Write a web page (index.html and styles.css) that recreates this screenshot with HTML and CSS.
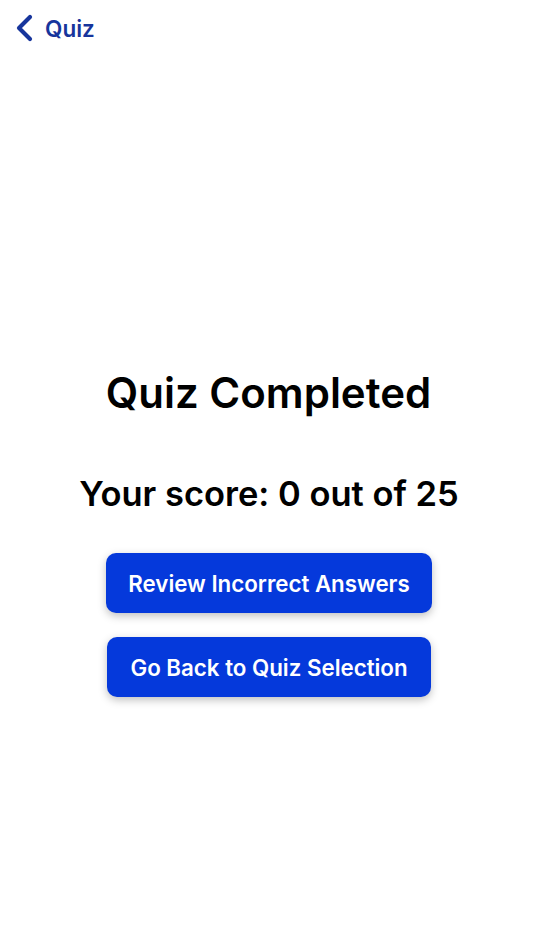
FILE: index.html
```html
<!DOCTYPE html>
<html lang="en">
<head>
<meta charset="utf-8">
<title>Quiz</title>
<link rel="stylesheet" href="styles.css">
</head>
<body>
<div class="screen">
  <header class="nav">
    <a class="back" href="#">
      <svg class="chev" width="20" height="28" viewBox="0 0 20 28"><path d="M16 3 L5 14 L16 25" fill="none" stroke="currentColor" stroke-width="4.2" stroke-linecap="round" stroke-linejoin="round"/></svg>
      <span class="back-label">Quiz</span>
    </a>
  </header>
  <main class="content">
    <h1 class="title">Quiz Completed</h1>
    <p class="score">Your score: 0 out of 25</p>
    <div class="actions">
      <button class="btn btn-review">Review Incorrect Answers</button>
      <button class="btn btn-back">Go Back to Quiz Selection</button>
    </div>
  </main>
</div>
</body>
</html>
```

FILE: styles.css
```css
* { box-sizing: border-box; }
html, body { margin: 0; padding: 0; background: #fff; }
body { font-family: Inter, "Liberation Sans", sans-serif; color: #000; }
.screen { width: 534px; height: 950px; display: flex; flex-direction: column; }
.nav { height: 56px; padding: 14px 0 0 14px; }
.back { display: inline-flex; align-items: center; gap: 11px; text-decoration: none; color: #17359c; }
.chev { display: block; }
.back-label { font-size: 22.5px; font-weight: 600; }
.content { display: flex; flex-direction: column; align-items: center; padding-top: 312px; }
.title { margin: 0 0 0 3px; font-size: 42px; font-weight: 600; line-height: 50px; letter-spacing: 0; }
.score { margin: 56px 0 0 4px; font-size: 34.5px; font-weight: 600; line-height: 40px; letter-spacing: 0; }
.actions { display: flex; flex-direction: column; align-items: center; gap: 24px; margin: 39px 0 0 4px; }
.btn { border: none; background: #0539db; color: #fff; font-family: inherit; font-size: 22.3px; font-weight: 600; height: 60px; padding: 0 10px; border-radius: 10px; box-shadow: 0 3px 8px rgba(0,0,0,0.25); }
.btn-review { width: 326px; }
.btn-back { width: 324px; }
```
